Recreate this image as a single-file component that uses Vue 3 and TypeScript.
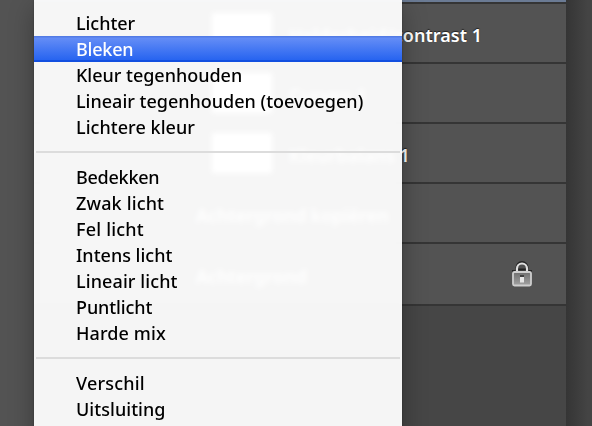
<script setup lang="ts">
interface MenuItem { label: string; tracking: number; active?: boolean }
interface Layer { name: string; tracking: number; mask?: boolean; locked?: boolean }

const groups: MenuItem[][] = [
  [
    { label: 'Lichter', tracking: -0.05 },
    { label: 'Bleken', tracking: -0.2, active: true },
    { label: 'Kleur tegenhouden', tracking: -0.02 },
    { label: 'Lineair tegenhouden (toevoegen)', tracking: 0 },
    { label: 'Lichtere kleur', tracking: 0.05 },
  ],
  [
    { label: 'Bedekken', tracking: -0.25 },
    { label: 'Zwak licht', tracking: 0.15 },
    { label: 'Fel licht', tracking: 0.2 },
    { label: 'Intens licht', tracking: 0 },
    { label: 'Lineair licht', tracking: 0.1 },
    { label: 'Puntlicht', tracking: -0.1 },
    { label: 'Harde mix', tracking: 0.1 },
  ],
  [
    { label: 'Verschil', tracking: 0.2 },
    { label: 'Uitsluiting', tracking: 0.05 },
  ],
]

const layers: Layer[] = [
  { name: 'Helderheid/contrast 1', tracking: 0.03, mask: true },
  { name: 'Curven 1', tracking: 0, mask: true },
  { name: 'Kleurbalans 1', tracking: 0.12, mask: true },
  { name: 'Achtergrond kopiëren', tracking: -0.05 },
  { name: 'Achtergrond', tracking: 0, locked: true },
]
</script>

<template>
  <main class="screen">
    <section class="layers">
      <div class="selected-edge"></div>
      <div v-for="layer in layers" :key="layer.name" class="layer" :class="{ locked: layer.locked }">
        <span class="preview" :class="{ adjusted: layer.mask }"><i v-if="layer.mask" class="mask"></i></span>
        <span class="name" :style="{ letterSpacing: layer.tracking + 'px' }">{{ layer.name }}</span>
        <svg v-if="layer.locked" class="lock" width="22" height="28" viewBox="0 0 22 28">
          <defs>
            <linearGradient id="lock-body" x1="0" y1="0" x2="0" y2="1">
              <stop offset="0" stop-color="#6e6e6e" />
              <stop offset="1" stop-color="#a2a2a2" />
            </linearGradient>
          </defs>
          <path d="M1 12V10H4.500V7.500A6.500 6.500 0 0 1 17.500 7.500V10H21V12" fill="#252525" />
          <path d="M6 13V8.500A5 5 0 0 1 16 8.500V13" fill="#505050" stroke="#dedede" stroke-width="2.200" />
          <path d="M7.200 9.500H14.800" stroke="#222" stroke-width="2" />
          <rect x="2" y="12" width="18" height="13.500" rx="1.500" fill="url(#lock-body)" stroke="#cecece" stroke-width="1.800" />
          <rect x="9" y="15" width="4" height="7.500" fill="#e5e5e5" />
          <rect x="9" y="15" width="4" height="2" fill="#404040" />
        </svg>
      </div>
    </section>
    <nav class="menu">
      <ul v-for="(group, g) in groups" :key="g">
        <li v-for="item in group" :key="item.label" :class="{ active: item.active }" :style="{ letterSpacing: item.tracking + 'px' }">{{ item.label }}</li>
      </ul>
    </nav>
  </main>
</template>

<style>
body { margin: 0; overflow: hidden; }
</style>
<style scoped>
.screen {
  position: relative;
  box-sizing: border-box;
  width: 592px;
  height: 426px;
  padding: 0 26px 0 34px;
  overflow: hidden;
  font-family: "Noto Sans", sans-serif;
  font-size: 18px;
  font-weight: 500;
  background: linear-gradient(90deg, #535353 0 566px, #353535 566px, #444 588px);
}
.layers { height: 426px; background: #464646; }
.selected-edge { height: 2px; background: #6b7b94; }
.layer {
  display: flex;
  align-items: center;
  box-sizing: border-box;
  height: 60px;
  border-top: 2px solid #353535;
  background: #535353;
  color: #fff;
}
.layer.locked { height: 64px; border-bottom: 2px solid #353535; }
.preview { flex: none; display: flex; justify-content: flex-end; width: 162px; }
.preview.adjusted { width: 255px; }
.mask { width: 60px; height: 40px; margin-right: 17px; background: #fff; }
.name { padding-top: 3px; font-weight: 600; white-space: nowrap; text-shadow: 0 -1px 1px #222; }
.lock { margin-left: auto; margin-right: 33px; }
.menu {
  position: absolute;
  top: 0;
  left: 34px;
  box-sizing: border-box;
  width: 368px;
  height: 440px;
  padding-top: 10px;
  background: rgba(255, 255, 255, .95);
  backdrop-filter: blur(2.5px);
  box-shadow: 0 8px 24px rgba(0, 0, 0, .3), 0 0 2px rgba(0, 0, 0, .3);
}
ul { margin: 0; padding: 0; list-style: none; }
ul + ul::before {
  content: "";
  display: block;
  height: 2px;
  margin: 0 2px;
  border: solid transparent;
  border-width: 11px 0;
  background: #dcdcdc content-box;
  background-clip: padding-box;
}
li { height: 26px; padding-left: 42px; line-height: 27px; color: #000; white-space: nowrap; }
li.active {
  color: #fff;
  background: linear-gradient(#527be5 0 1px, #648df6 2px, #2764f0 24px, #124fe0 24px);
}
</style>
